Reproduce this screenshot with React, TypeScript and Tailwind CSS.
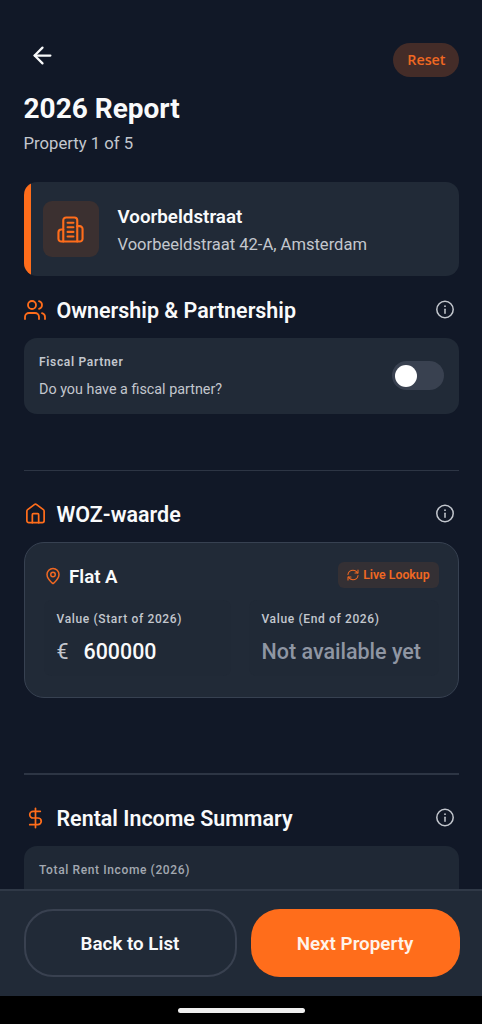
import { useState } from "react";
import type { ReactNode } from "react";
import { ArrowLeft, DollarSign, MapPin, Users } from "lucide-react";

const BuildingIcon = () => (
  <svg width="27" height="27" viewBox="0 0 28 28" fill="none" stroke="currentColor" strokeWidth="2.200" strokeLinecap="round" strokeLinejoin="round">
    <path d="M6.500 26.500V4.500a3 3 0 0 1 3-3h8.500a3 3 0 0 1 3 3v22" />
    <path d="M6.500 14H4.500a3 3 0 0 0-3 3v6.500a3 3 0 0 0 3 3h19a3 3 0 0 0 3-3V13.500a3 3 0 0 0-3-3H21" />
    <path d="M11 7h6M11 11.700h6M11 16.500h6M11 21.300h6" />
  </svg>
);

const HomeIcon = () => (
  <svg width="24" height="24" viewBox="0 0 24 24" fill="none" stroke="currentColor" strokeWidth="1.800" strokeLinecap="round" strokeLinejoin="round">
    <path d="M3 9a2 2 0 0 1 .8-1.600l7-5.200a2 2 0 0 1 2.400 0l7 5.200a2 2 0 0 1 .8 1.600V19a2 2 0 0 1-2 2H5a2 2 0 0 1-2-2z" />
    <path d="M8.700 21v-8.300a1 1 0 0 1 1-1h4.600a1 1 0 0 1 1 1V21" />
  </svg>
);

const SyncIcon = () => (
  <svg width="12" height="12" viewBox="0 0 24 24" fill="none" stroke="currentColor" strokeWidth="2.200" strokeLinecap="round" strokeLinejoin="round">
    <path d="M2 11C2.500 6 7 2.500 12 2.500c4 0 7 2 9 5.500" />
    <path d="M22 2v6h-6" />
    <path d="M22 13c-.5 5-5 8.500-10 8.500-4 0-7-2-9-5.500" />
    <path d="M2 22v-6h6" />
  </svg>
);

const InfoIcon = () => (
  <svg width="20" height="20" viewBox="0 0 20 20" fill="none" stroke="currentColor" strokeWidth="1.500" strokeLinecap="round">
    <circle cx="10" cy="9.500" r="8.200" />
    <path d="M10 9.200v4" />
    <circle cx="10" cy="6.200" r="0.900" fill="currentColor" stroke="none" />
  </svg>
);

function SectionHeader({ icon, title }: { icon: ReactNode; title: string }) {
  return (
    <div className="flex h-8 items-center justify-between pr-[4.500px]">
      <div className="flex items-center gap-[10px]">
        <span className="-mt-px flex w-[23px] justify-center text-[#ff6d1b]">{icon}</span>
        <h2 className="pt-px text-[21.450px] font-semibold leading-8 text-gray-50">{title}</h2>
      </div>
      <button className="text-[#c3c7ce]">
        <InfoIcon />
      </button>
    </div>
  );
}

export default function App() {
  const [hasPartner, setHasPartner] = useState(false);

  return (
    <div className="flex h-[1024px] w-full flex-col overflow-hidden bg-[#111827] font-['Roboto',sans-serif]">
      <main className="min-h-0 flex-1 overflow-hidden pl-[23.500px] pr-[22.600px]">
        <header className="flex items-start justify-between pt-[43px]">
          <button className="ml-[7px] flex h-6 w-6 items-center justify-center text-gray-50">
            <ArrowLeft size={27} strokeWidth={2} className="shrink-0" />
          </button>
          <button className="h-[34px] w-[66px] rounded-full bg-[#442c28] font-['Open_Sans',sans-serif] text-[14.300px] font-semibold text-[#f06822]">
            Reset
          </button>
        </header>
        <h1 className="mt-[14px] text-[28px] font-bold leading-9 text-gray-50">2026 Report</h1>
        <p className="mt-[5px] text-[16.700px] leading-6 text-[#c3c7ce]">Property 1 of 5</p>

        {/* Property */}
        <div className="mt-[26px] flex h-[94px] overflow-hidden rounded-[13px] bg-[#212a37]">
          <div className="w-[7px] shrink-0 bg-[#ff6d1b]" />
          <div className="flex items-center pl-3">
            <div className="flex h-[56px] w-[56px] items-center justify-center rounded-[9px] bg-[#3b3030] text-[#ff6d1b]">
              <BuildingIcon />
            </div>
            <div className="ml-[19px] pt-[3px]">
              <p className="text-[18.800px] font-semibold leading-7 text-gray-50">Voorbeldstraat</p>
              <p className="text-[16.570px] leading-7 text-[#c3c7ce]">Voorbeeldstraat 42-A, Amsterdam</p>
            </div>
          </div>
        </div>

        {/* Ownership */}
        <section className="pt-[18px]">
          <SectionHeader icon={<Users size={24} strokeWidth={1.8} className="shrink-0" />} title="Ownership & Partnership" />
          <div className="mt-[11.500px] flex h-[76px] items-center justify-between rounded-[13px] bg-[#212a37] px-[15.500px]">
            <div className="pt-[2px]">
              <p className="text-[12px] font-semibold leading-5 tracking-[0.680px] text-[#c3c7ce]">Fiscal Partner</p>
              <p className="mt-[6px] text-[14.350px] leading-6 text-[#c3c7ce]">Do you have a fiscal partner?</p>
            </div>
            <button
              role="switch"
              aria-checked={hasPartner}
              onClick={() => setHasPartner(!hasPartner)}
              className={`flex h-[29px] w-[52px] items-center rounded-full px-[3.500px] ${hasPartner ? "justify-end bg-[#ff6d1b]" : "bg-[#394150]"}`}
            >
              <span className="h-[22px] w-[22px] rounded-full bg-white" />
            </button>
          </div>
        </section>

        <div className="mt-[56.500px] h-px bg-[#2d3544]" />

        {/* WOZ */}
        <section className="pt-[27px]">
          <SectionHeader icon={<HomeIcon />} title="WOZ-waarde" />
          <div className="mt-[12px] h-[156px] rounded-[20px] border border-[#374151] bg-[#212a37] px-[19.500px] pt-[19px]">
            <div className="flex h-[26px] items-center justify-between">
              <div className="flex items-center gap-[7px] pt-px">
                <MapPin size={18} strokeWidth={2} className="text-[#f06822]" />
                <h3 className="pt-[2px] text-[18.700px] font-semibold leading-7 text-gray-50">Flat A</h3>
              </div>
              <button className="flex h-[26px] w-[101px] items-center justify-center gap-[4px] rounded-[6px] bg-[#343034] text-[12.300px] font-semibold text-[#f06822]">
                <SyncIcon />
                Live Lookup
              </button>
            </div>
            <div className="mt-[12px] flex gap-[18px]">
              <div className="h-[76px] w-[187px] rounded-[8px] bg-[#202936] px-[12.500px] pt-[9px]">
                <p className="text-[12px] font-medium leading-5 tracking-[0.650px] text-[#c3c7ce]">Value (Start of 2026)</p>
                <p className="mt-[9px] flex text-[21.400px] font-medium leading-7 text-gray-50">
                  <span className="w-[27px] font-normal text-[#c3c7ce]">€</span>
                  600000
                </p>
              </div>
              <div className="h-[76px] flex-1 whitespace-nowrap rounded-[8px] bg-[#202936] px-[12.500px] pt-[9px]">
                <p className="text-[12px] font-medium leading-5 tracking-[0.640px] text-[#c3c7ce]">Value (End of 2026)</p>
                <p className="mt-[9px] text-[21.500px] font-medium leading-7 text-[#8f96a3]">Not available yet</p>
              </div>
            </div>
          </div>
        </section>

        <div className="mt-[75px] h-[2px] bg-[#2d3544]" />

        {/* Rental income */}
        <section className="pt-[27px]">
          <SectionHeader icon={<DollarSign size={24} strokeWidth={1.8} />} title="Rental Income Summary" />
          <div className="mt-[12px] h-[120px] rounded-[13px] bg-[#1f2835] px-[15.500px] pt-[14px]">
            <p className="text-[12px] font-medium leading-5 tracking-[0.620px] text-[#a3a8b1]">Total Rent Income (2026)</p>
          </div>
        </section>
      </main>

      <footer className="flex h-[107px] shrink-0 gap-[14px] border-t-2 border-[#303947] bg-[#212a37] pl-[23.500px] pr-[22.500px] pt-[18px]">
        <button className="h-[68px] w-[213px] rounded-[29px] border-2 border-[#394150] pt-[2px] text-[18.800px] font-semibold text-gray-50">
          Back to List
        </button>
        <button className="h-[68px] flex-1 rounded-[29px] bg-[#ff6d1b] pt-[2px] text-[18.800px] font-semibold text-[#fff3ea]">
          Next Property
        </button>
      </footer>
      <div className="flex h-7 shrink-0 items-center justify-center bg-black">
        <div className="h-[5px] w-[127px] rounded-full bg-[#efefef]" />
      </div>
    </div>
  );
}
